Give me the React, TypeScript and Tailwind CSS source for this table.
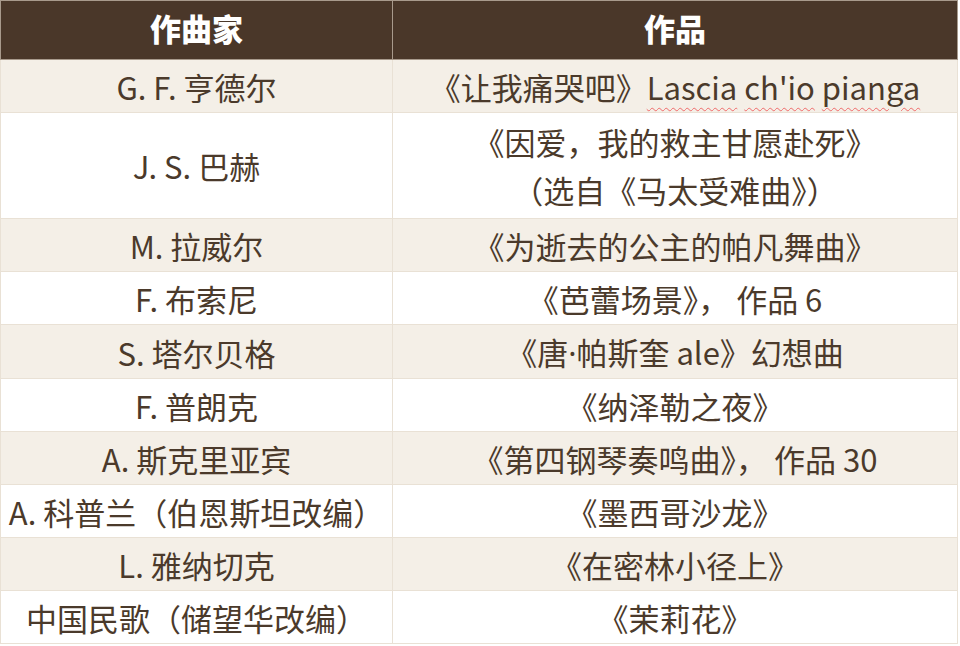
const rows: { composer: string; work: React.ReactNode; tall?: boolean }[] = [
  {
    composer: 'G. F. 亨德尔',
    work: (
      <>
        《让我痛哭吧》
        <Squiggle>Lascia</Squiggle> <Squiggle>ch'io</Squiggle> <Squiggle>pianga</Squiggle>
      </>
    ),
  },
  {
    composer: 'J. S. 巴赫',
    tall: true,
    work: (
      <>
        《因爱，我的救主甘愿赴死》
        <br />
        （选自《马太受难曲》）
      </>
    ),
  },
  { composer: 'M. 拉威尔', work: '《为逝去的公主的帕凡舞曲》' },
  { composer: 'F. 布索尼', work: '《芭蕾场景》， 作品 6' },
  {
    composer: 'S. 塔尔贝格',
    work: (
      <>
        《唐<span style={{ fontFamily: '"Noto Sans", sans-serif' }}>·</span>帕斯奎 ale》幻想曲
      </>
    ),
  },
  { composer: 'F. 普朗克', work: '《纳泽勒之夜》' },
  { composer: 'A. 斯克里亚宾', work: '《第四钢琴奏鸣曲》， 作品 30' },
  { composer: 'A. 科普兰（伯恩斯坦改编）', work: '《墨西哥沙龙》' },
  { composer: 'L. 雅纳切克', work: '《在密林小径上》' },
  { composer: '中国民歌（储望华改编）', work: '《茉莉花》' },
];

function Squiggle({ children }: { children: React.ReactNode }) {
  return (
    <span className="underline decoration-wavy decoration-[#f06a6a] decoration-1 underline-offset-[7px]">
      {children}
    </span>
  );
}

export default function App() {
  return (
    <div
      className="w-[960px] h-[646px] bg-white text-[#4b3a2b]"
      style={{ fontFamily: '"Noto Sans CJK SC", "Noto Sans", sans-serif' }}
    >
      <table className="w-[958px] border-collapse table-fixed">
        <colgroup>
          <col className="w-[392px]" />
          <col />
        </colgroup>
        <thead>
          <tr className="bg-[#4a3729] text-white">
            <th className="h-[59px] p-0 pb-[4px] border border-[#a89a8c] text-[31px] font-black leading-[40px] text-center">作曲家</th>
            <th className="h-[59px] p-0 pb-[4px] border border-[#a89a8c] text-[31px] font-black leading-[40px] text-center">作品</th>
          </tr>
        </thead>
        <tbody>
          {rows.map((r, i) => (
            <tr key={i} className={i % 2 === 0 ? 'bg-[#f4efe7]' : 'bg-white'}>
              <td
                className={`border border-[#e9e1d5] text-center text-[31px] leading-[48px] whitespace-nowrap px-0 ${r.tall ? 'pt-[5px] pb-[4px]' : 'pt-[3px] pb-[1px]'}`}
              >
                {r.composer}
              </td>
              <td
                className={`border border-[#e9e1d5] text-center text-[31px] leading-[48px] whitespace-nowrap px-0 ${r.tall ? 'pt-[5px] pb-[4px]' : 'pt-[3px] pb-[1px]'}`}
              >
                {r.work}
              </td>
            </tr>
          ))}
        </tbody>
      </table>
    </div>
  );
}
